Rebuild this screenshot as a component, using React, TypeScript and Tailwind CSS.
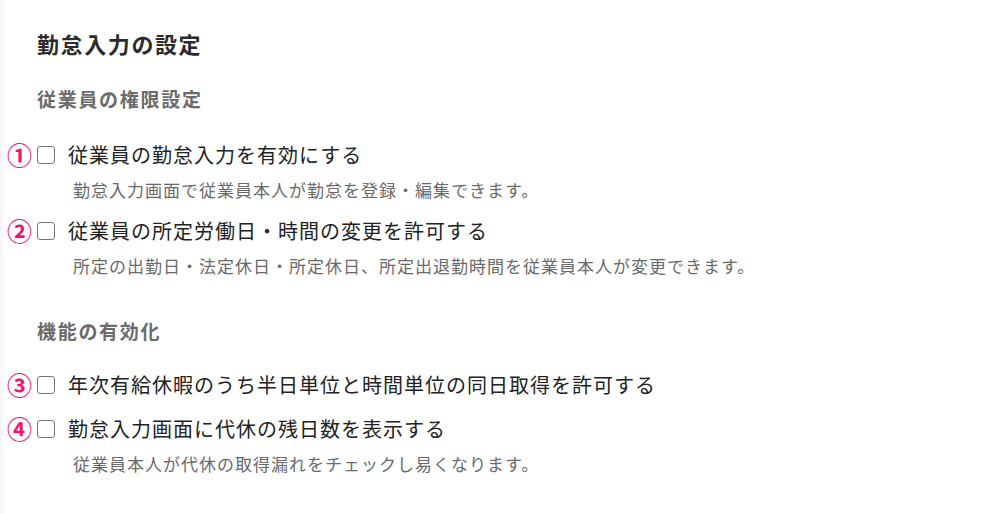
const font = { fontFamily: '"Noto Sans CJK JP", "Noto Sans", sans-serif' }

type Item = { no: string; label: string; desc?: string }

const permissionItems: Item[] = [
  { no: '①', label: '従業員の勤怠入力を有効にする', desc: '勤怠入力画面で従業員本人が勤怠を登録・編集できます。' },
  { no: '②', label: '従業員の所定労働日・時間の変更を許可する', desc: '所定の出勤日・法定休日・所定休日、所定出退勤時間を従業員本人が変更できます。' },
]

const featureItems: Item[] = [
  { no: '③', label: '年次有給休暇のうち半日単位と時間単位の同日取得を許可する' },
  { no: '④', label: '勤怠入力画面に代休の残日数を表示する', desc: '従業員本人が代休の取得漏れをチェックし易くなります。' },
]

function SettingRow({ item }: { item: Item }) {
  return (
    <div className="flex flex-col">
      <label className="relative flex items-center h-[30px] cursor-pointer">
        {/* annotation number */}
        <span className="absolute left-[-30px] top-[-1px] text-[25px] leading-[30px] font-bold text-[#f2156f]">{item.no}</span>
        <span className="w-[18px] h-[18px] border-[1.5px] border-[#767676] rounded-[3px] bg-white shrink-0" />
        <span className="ml-[13px] text-[20px] leading-[30px] tracking-[1px] text-[#222]">{item.label}</span>
      </label>
      {item.desc && (
        <p className="ml-[36px] mt-[8px] text-[17px] leading-[24px] tracking-[1px] text-[#6a6a6a]">{item.desc}</p>
      )}
    </div>
  )
}

export default function App() {
  return (
    <div className="min-h-[514px] w-full bg-white shadow-[inset_7px_0_6px_-5px_rgba(0,0,0,0.06)]" style={font}>
      <div className="pl-[37px] pt-[28px]">
        <h1 className="text-[22px] leading-[30px] tracking-[1.6px] font-bold text-[#2b2b2b]">勤怠入力の設定</h1>

        <section className="mt-[26px]">
          <h2 className="text-[19px] leading-[30px] tracking-[1.7px] font-bold text-[#6b6b6b]">従業員の権限設定</h2>
          <div className="mt-[26px] flex flex-col gap-[14px]">
            {permissionItems.map((it) => (
              <SettingRow key={it.no} item={it} />
            ))}
          </div>
        </section>

        <section className="mt-[38px]">
          <h2 className="text-[19px] leading-[30px] tracking-[1.7px] font-bold text-[#6b6b6b]">機能の有効化</h2>
          <div className="mt-[24px] flex flex-col gap-[14px]">
            {featureItems.map((it) => (
              <SettingRow key={it.no} item={it} />
            ))}
          </div>
        </section>
      </div>
    </div>
  )
}
